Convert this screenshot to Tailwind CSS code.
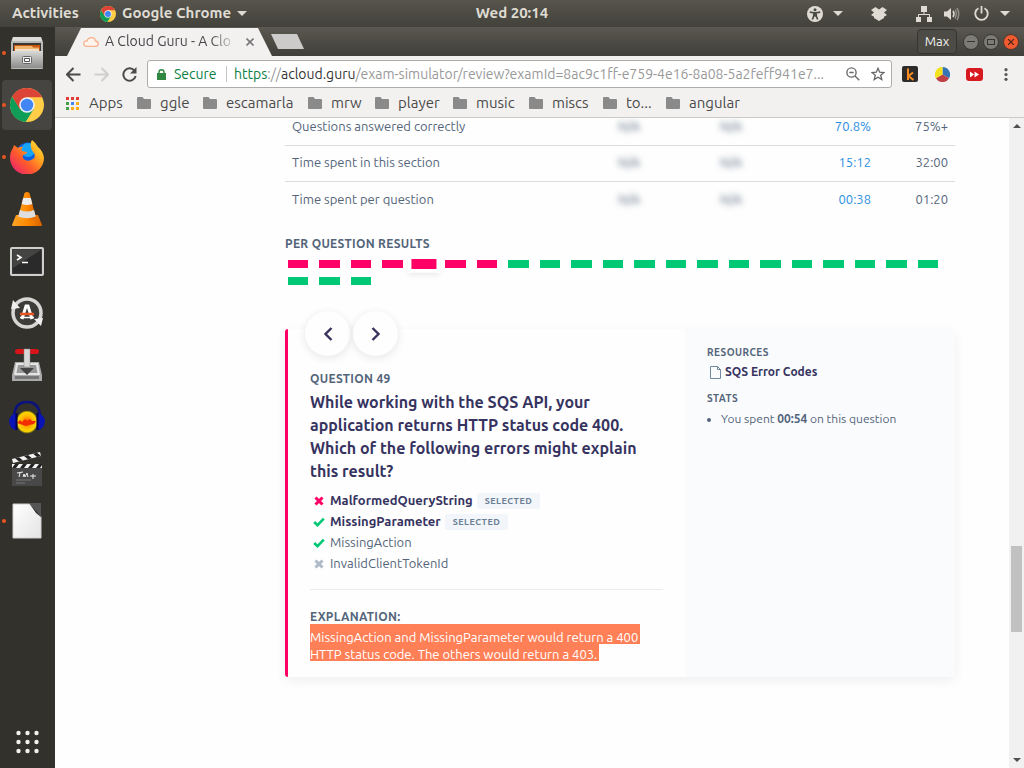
<!DOCTYPE html>
<html lang="en">
<head>
<meta charset="utf-8">
<title>A Cloud Guru - Exam Review</title>
<script src="https://cdn.jsdelivr.net/npm/@tailwindcss/browser@4"></script>
</head>
<body class="flex h-screen flex-col overflow-hidden bg-[#fefefe] font-['Ubuntu','Noto_Sans',sans-serif] text-[13px] text-[#54657a]">

<svg class="absolute size-0" aria-hidden="true">
  <defs>
    <linearGradient id="steel" x1="0" y1="0" x2="0" y2="1"><stop offset="0" stop-color="#d8d8d6"/><stop offset="1" stop-color="#8d8d8b"/></linearGradient>
    <linearGradient id="paper" x1="0" y1="0" x2="1" y2="1"><stop offset="0" stop-color="#fff"/><stop offset="1" stop-color="#e4e4e4"/></linearGradient>
    <linearGradient id="fox" x1="1" y1="0" x2="0" y2="1"><stop offset="0" stop-color="#fff44f"/><stop offset=".3" stop-color="#ffb01f"/><stop offset=".6" stop-color="#ff5a2c"/><stop offset="1" stop-color="#e4147e"/></linearGradient>
    <radialGradient id="wave"><stop offset="0" stop-color="#ff4a00"/><stop offset=".5" stop-color="#ffb400"/><stop offset=".85" stop-color="#f7d800"/><stop offset="1" stop-color="#b89a00" stop-opacity=".3"/></radialGradient>
    <linearGradient id="cone" x1="0" y1="0" x2="1" y2="0"><stop offset="0" stop-color="#ffa52a"/><stop offset=".5" stop-color="#ff8a00"/><stop offset="1" stop-color="#d96300"/></linearGradient>
    <symbol id="chrome" viewBox="0 0 48 48">
      <circle cx="24" cy="24" r="24" fill="#ffcd46"/>
      <path d="M3.200 12A24 24 0 0 0 22 48L34 29 14 29Z" fill="#0f9d58"/>
      <path d="M24 13H45.300A24 24 0 0 0 3.200 12L14 30Z" fill="#db4437"/>
      <circle cx="24" cy="24" r="11" fill="#f1f1f1"/><circle cx="24" cy="24" r="8.800" fill="#4285f4"/>
    </symbol>
    <symbol id="folder" viewBox="0 0 14 12"><path d="M1 0H5.500L7 2H13Q14 2 14 3V11Q14 12 13 12H1Q0 12 0 11V1Q0 0 1 0Z" fill="#8a8a8a"/></symbol>
    <symbol id="check" viewBox="0 0 12 10"><path d="M1.200 5 4.500 8.200 10.800 1.700" fill="none" stroke="#00c875" stroke-width="2.600"/></symbol>
    <symbol id="cross" viewBox="0 0 10 10"><path d="M1.500 1.500 8.500 8.500M8.500 1.500 1.500 8.500" fill="none" stroke="currentColor" stroke-width="3"/></symbol>
  </defs>
</svg>

<!-- Desktop top bar -->
<header class="grid h-[27px] shrink-0 grid-cols-[1fr_auto_1fr] items-center bg-linear-to-b from-[#57554c] to-[#42413b] text-[15px] font-bold text-[#dfdbd2]">
  <div class="flex items-center whitespace-nowrap">
    <button class="ml-3 w-[68px] text-left">Activities</button>
    <button class="ml-5 flex items-center gap-[6px]">
      <svg class="size-4"><use href="#chrome"/></svg>Google Chrome
      <svg class="h-[5px] w-[10px]" viewBox="0 0 10 5"><path d="M0 0H10L5 5Z" fill="currentColor"/></svg>
    </button>
  </div>
  <button>Wed 20:14</button>
  <div class="flex items-center justify-end pr-[14px]">
    <button class="flex items-center gap-[10px]" aria-label="Accessibility">
      <svg class="size-4" viewBox="0 0 16 16"><circle cx="8" cy="8" r="8" fill="currentColor"/><g fill="none" stroke="#4b4a43" stroke-width="1.700"><path d="M2.800 6.200 8 7 13.200 6.200M8 6V9.500M6.800 7V10L5.300 13.500M9.200 7V10L10.700 13.500"/></g><circle cx="8" cy="3.800" r="1.500" fill="#4b4a43"/><path d="M6.500 6H9.500V10.500H6.500Z" fill="#4b4a43"/></svg>
      <svg class="h-[5px] w-[10px]" viewBox="0 0 10 5"><path d="M0 0H10L5 5Z" fill="currentColor"/></svg>
    </button>
    <button class="ml-[28px]" aria-label="Dropbox"><svg class="h-[14px] w-4" viewBox="0 0 16 14"><path d="M4.500 0 8 2.500 11.500 0 16 3 13 5.500 16 8 13 9.800V11L8 14 3 11V9.800L0 8 3 5.500 0 3Z" fill="currentColor"/></svg></button>
    <button class="ml-[29px]" aria-label="Network"><svg class="size-4" viewBox="0 0 16 16"><path d="M5 0H11V6H5ZM0 11H5V16H0ZM11 11H16V16H11Z" fill="currentColor"/><path d="M8 6V8.500M2.500 11V8.500H13.500V11" fill="none" stroke="currentColor"/></svg></button>
    <button class="ml-[12px]" aria-label="Volume"><svg class="h-[14px] w-4" viewBox="0 0 16 14"><path d="M0 4.500H3L7 1V13L3 9.500H0Z" fill="currentColor"/><path d="M9 4Q11 7 9 10" fill="none" stroke="currentColor" stroke-width="1.500"/><path d="M11 2.500Q13.500 7 11 11.500M13 1Q16.500 7 13 13" fill="none" stroke="#918e85" stroke-width="1.500"/></svg></button>
    <button class="ml-[14px] flex items-center gap-[11px]" aria-label="System menu">
      <svg class="size-[15px]" viewBox="0 0 15 15"><path d="M4.500 2.200A6.200 6.200 0 1 0 10.500 2.200M7.500 0V7.500" fill="none" stroke="currentColor" stroke-width="1.800"/></svg>
      <svg class="h-[5px] w-[10px]" viewBox="0 0 10 5"><path d="M0 0H10L5 5Z" fill="currentColor"/></svg>
    </button>
  </div>
</header>

<div class="flex min-h-0 flex-1">
  <!-- Dock -->
  <nav class="flex w-[55px] shrink-0 flex-col gap-[2px] bg-[#33312c] pt-[1px]" aria-label="Dock">
    <button class="flex h-[50px] items-center" aria-label="Files"><i class="ml-[2px] size-1 rounded-full bg-[#e95420]"></i>
      <svg class="ml-[4px] size-[34px]" viewBox="0 0 34 34"><path d="M3 1H31L33 6V32Q33 33 32 33H2Q1 33 1 32V6Z" fill="#b9b9b7"/><path d="M3 1H31L32 5H2Z" fill="#dcdcda"/><path d="M3 7H31V15H3Z" fill="#3a3835"/><path d="M4 9H30V15H4Z" fill="#c9560e"/><path d="M5 10H22L23 11.500H29V15H5Z" fill="#f3b46d"/><path d="M5 13H29V15H5Z" fill="#eee0c8"/><path d="M1 15H33V32H1Z" fill="url(#steel)"/><rect x="12.500" y="20.500" width="9" height="7" rx="1" fill="#eee" stroke="#666"/><path d="M14.500 22.500H19.500V25.500H14.500Z" fill="#fff" stroke="#555"/></svg></button>
    <button class="mr-[3px] ml-[2px] flex h-[50px] items-center rounded-[4px] bg-[#464541]" aria-label="Chrome"><i class="size-1 rounded-full bg-[#e95420]"></i><svg class="ml-1 size-[34px]"><use href="#chrome"/></svg></button>
    <button class="flex h-[50px] items-center" aria-label="Firefox"><i class="ml-[2px] size-1 rounded-full bg-[#e95420]"></i>
      <svg class="ml-1 size-[34px]" viewBox="0 0 34 34"><circle cx="18" cy="15" r="12.500" fill="#0a5fe0"/><circle cx="18" cy="10" r="7" fill="#16a6f5"/><path d="M22 0Q26 3 28 7 33 11 34 18A17 16.500 0 0 1 0 18Q0 12 3 8L4 5 8 8Q10 6 13 7 11 9 12 11L17 12Q17 14 13 15 12 18 15 20 19 22 23 19 26 17 24 13 21 10 21 7 20 3 22 0Z" fill="url(#fox)"/></svg></button>
    <button class="flex h-[50px] items-center" aria-label="VLC">
      <svg class="ml-[11px] h-[36px] w-[32px]" viewBox="0 0 32 36"><path d="M5 24H27L31 34Q31 35 30 35H2Q1 35 1 34Z" fill="url(#cone)"/><path d="M13.500 2Q16 0 18.500 2L25 27Q16 32 7 27Z" fill="url(#cone)"/><path d="M12.200 7H19.800L21.300 13Q16 15 10.700 13Z" fill="#eee"/><path d="M9 19Q16 22 23 19L24.800 25.500Q16 29 7.200 25.500Z" fill="#dedede"/></svg></button>
    <button class="flex h-[50px] items-center" aria-label="Terminal">
      <svg class="ml-[10px] h-[29px] w-[34px]" viewBox="0 0 34 29"><rect x="1" y="1" width="32" height="27" rx="1" fill="#3a3b3a" stroke="#cfcfcd" stroke-width="2"/><path d="M3 3H31V26H3Z" fill="#292a29"/><path d="M3 3H31L3 21Z" fill="#444543"/><path d="M7 8 11 10.500 7 13M12 15.500H18" fill="none" stroke="#fff" stroke-width="1.600"/></svg></button>
    <button class="flex h-[50px] items-center" aria-label="Software Updater">
      <svg class="ml-[10px] size-[34px]" viewBox="0 0 34 34"><circle cx="17" cy="17" r="14" fill="#3d3c38" stroke="#d6d6d4" stroke-width="3.500"/><path d="M1 13 10 12 3 4Z" fill="#eee"/><path d="M33 22 24 23 31 30Z" fill="#eee"/><path d="M12 23 16 10H18L22 23" fill="none" stroke="#fff" stroke-width="3"/><path d="M10 18H24" stroke="#e95420" stroke-width="2.500"/><path d="M10 21.500H24" stroke="#fff" stroke-width="1.500"/></svg></button>
    <button class="flex h-[50px] items-center" aria-label="Transmission">
      <svg class="ml-[12px] h-[34px] w-[30px]" viewBox="0 0 30 34"><path d="M3 14H27L30 27V33H0V27Z" fill="#aaa"/><path d="M4 15H26L28 27H2Z" fill="#e5e5e5"/><path d="M6 17H24L25.500 25H4.500Z" fill="#999"/><path d="M3 28H27V31H3Z" fill="#777"/><rect x="3" y="1" width="24" height="5" rx="2.500" fill="#d81418"/><path d="M12 1H18V19H12Z" fill="#d8d8d6" stroke="#888" stroke-width=".5"/><path d="M8 20H22L15 27Z" fill="#454545"/></svg></button>
    <button class="flex h-[50px] items-center" aria-label="Audacity">
      <svg class="ml-[9px] h-[34px] w-[36px]" viewBox="0 0 36 34"><ellipse cx="18" cy="22" rx="11" ry="11.500" fill="url(#wave)"/><path d="M8 23 11 20 13 22 16 19 18 21 21 19 23 21 27 21 25 24 20 25 17 26 14 25Z" fill="#f22b00"/><path d="M5 18Q5 2 18 2T31 18" fill="none" stroke="#0a1280" stroke-width="2.500"/><path d="M8 13V30Q1 30 0 21 1 14 8 13ZM28 13V30Q35 30 36 21 35 14 28 13Z" fill="#0a14b4"/><path d="M7.500 13V30M28.500 13V30" stroke="#000050" stroke-width="2"/></svg></button>
    <button class="flex h-[50px] items-center" aria-label="Video editor">
      <svg class="ml-[12px] h-[34px] w-[30px]" viewBox="0 0 30 34"><path d="M0 7 28 0 29 4 1 11Z" fill="#f2f2f2"/><path d="M3 6.200 7 5.200 11 8.500 7 9.500ZM12 4 16 3 20 6.300 16 7.300ZM21 1.800 25 .8 29 4 25 5Z" fill="#222"/><path d="M0 12H30V34H0Z" fill="#484848"/><path d="M0 12H30V16H0Z" fill="#f2f2f2"/><path d="M3 12H7L4 16H0ZM11 12H15L12 16H8ZM19 12H23L20 16H16ZM27 12H30V13L28 16H24Z" fill="#222"/><path d="M5 21 11 20M8 21 7 25M11 25 12 22 13 25 15 21 16 25M18 24H24M21 22V27" fill="none" stroke="#eee"/><path d="M4 28H19M4 31H13" stroke="#777"/></svg></button>
    <button class="flex h-[50px] items-center" aria-label="LibreOffice"><i class="ml-[2px] size-1 rounded-full bg-[#e95420]"></i>
      <svg class="ml-[6px] h-[36px] w-[30px]" viewBox="0 0 30 36"><path d="M1 1H18L29 13V35H1Z" fill="url(#paper)" stroke="#d0d0d0"/><path d="M17 0H29V13Z" fill="#555"/><path d="M17 0 30 14H29L24 10Z" fill="#2c2c2c"/></svg></button>
    <button class="mt-auto mb-[14px] ml-[16px] w-[24px]" aria-label="Show applications">
      <svg class="size-6" viewBox="0 0 24 24" fill="#f3f2f0"><circle cx="2.500" cy="3" r="2.200"/><circle cx="11.500" cy="3" r="2.200"/><circle cx="20.500" cy="3" r="2.200"/><circle cx="2.500" cy="12" r="2.200"/><circle cx="11.500" cy="12" r="2.200"/><circle cx="20.500" cy="12" r="2.200"/><circle cx="2.500" cy="21" r="2.200"/><circle cx="11.500" cy="21" r="2.200"/><circle cx="20.500" cy="21" r="2.200"/></svg></button>
  </nav>

  <div class="flex min-w-0 flex-1 flex-col">
    <!-- Tab strip -->
    <div class="flex h-[29px] shrink-0 items-center bg-linear-to-b from-[#5a5850] to-[#403f39]">
      <div class="ml-[12px] flex h-full w-[205px] items-center bg-[#f2f1f0] pl-4 text-[14px] text-[#45454a] [clip-path:polygon(14px_1px,191px_1px,100%_100%,0_100%)]">
        <svg class="h-[10px] w-4 shrink-0" viewBox="0 0 16 10"><path d="M4 9.300Q.7 9.300.7 6.500T4 4Q5 .7 8.500.7T12.500 4Q15.300 4.300 15.300 6.700T12.500 9.300Z" fill="#fff4ec" stroke="#f7b18c" stroke-width="1.300"/></svg>
        <span class="ml-[6px] w-[132px] mask-r-from-80% whitespace-nowrap">A Cloud Guru - A Clo</span>
        <button class="ml-[9px]" aria-label="Close tab"><svg class="size-2" viewBox="0 0 8 8"><path d="M.5.5 7.500 7.500M7.500.5.5 7.500" stroke="#77777a" stroke-width="1.600"/></svg></button>
      </div>
      <button class="-ml-px h-[15px] w-[33px] bg-[#cccbc9] [clip-path:polygon(0_0,26px_0,100%_100%,7px_100%)]" aria-label="New tab"></button>
      <button class="mr-[6px] ml-auto flex h-[25px] w-[40px] items-center justify-center rounded-[4px] border border-[#35342f] bg-[#4c4b45] text-[13px] text-[#f2f1f0]">Max</button>
      <div class="flex gap-1 pr-[5px]">
        <button class="flex size-4 items-center justify-center rounded-full border border-[#3a3934] bg-[#7d7b75]" aria-label="Minimize"><i class="h-px w-2 bg-[#35342f]"></i></button>
        <button class="flex size-4 items-center justify-center rounded-full border border-[#3a3934] bg-[#7d7b75]" aria-label="Maximize"><i class="h-[6px] w-2 border border-[#35342f]"></i></button>
        <button class="flex size-4 items-center justify-center rounded-full border border-[#56382c] bg-[#f05a30]" aria-label="Close"><svg class="size-[6px]" viewBox="0 0 6 6"><path d="M0 0 6 6M6 0 0 6" stroke="#4a2415" stroke-width="1.200"/></svg></button>
      </div>
    </div>

    <!-- Toolbar -->
    <div class="flex h-9 shrink-0 items-center bg-[#f2f1f0] pr-[16px] pl-[11px]">
      <button aria-label="Back"><svg class="size-[15px]" viewBox="0 0 15 15"><path d="M14.500 7.500H1.500M7.500 1 1 7.500 7.500 14" fill="none" stroke="#4a4a4a" stroke-width="2"/></svg></button>
      <button class="ml-[13px]" aria-label="Forward"><svg class="size-[15px]" viewBox="0 0 15 15"><path d="M.5 7.500H13.500M7.500 1 14 7.500 7.500 14" fill="none" stroke="#cfcecd" stroke-width="2"/></svg></button>
      <button class="ml-[13px]" aria-label="Reload"><svg class="size-[15px]" viewBox="0 0 15 15"><path d="M12.500 3.800A6.200 6.200 0 1 0 13.600 9" fill="none" stroke="#4a4a4a" stroke-width="2"/><path d="M14.500 0V6.500H8Z" fill="#4a4a4a"/></svg></button>
      <div class="ml-[10px] flex h-[28px] min-w-0 flex-1 items-center rounded-[3px] border border-[#adacab] bg-white pr-[6px] pl-[9px] text-[14px]">
        <svg class="h-[11px] w-[9px] shrink-0" viewBox="0 0 9 11"><path d="M0 4H9V11H0Z" fill="#2f8741"/><path d="M2 5V3Q2 .8 4.500.8T7 3V5" fill="none" stroke="#2f8741" stroke-width="1.400"/></svg>
        <span class="ml-[8px] w-[43px] text-[#0b8043]">Secure</span>
        <i class="ml-[9px] h-4 w-px bg-[#c6c6c6]"></i>
        <span class="ml-[7px] min-w-0 flex-1 whitespace-nowrap text-[#999]"><span class="text-[#0b8043]">https</span>://<span class="text-[#333]">acloud.guru</span>/exam-simulator/review?examId=8ac9c1ff-e759-4e16-8a08-5a2feff941e7...</span>
        <button class="ml-[12px]" aria-label="Zoom"><svg class="size-[14px]" viewBox="0 0 14 14"><g fill="none" stroke="#6b6b6b" stroke-width="1.400"><circle cx="5.500" cy="5.500" r="4.600"/><path d="M9 9 13.300 13.300M3.300 5.500H7.700"/></g></svg></button>
        <button class="ml-[11px]" aria-label="Bookmark"><svg class="size-[14px]" viewBox="0 0 14 14"><path d="M7 1.300 8.700 5.200 13 5.500 9.700 8.200 10.800 12.500 7 10.200 3.200 12.500 4.300 8.200 1 5.500 5.300 5.200Z" fill="none" stroke="#666" stroke-width="1.300"/></svg></button>
      </div>
      <button class="ml-[10px]" aria-label="Extension k"><svg class="size-4" viewBox="0 0 16 16"><rect width="16" height="16" rx="2" fill="#2e2c2b"/><path d="M6 2.500V14M11 6.500 6.500 10 11.500 14" fill="none" stroke="#f68b1f" stroke-width="2"/></svg></button>
      <button class="ml-[17px]" aria-label="Color wheel"><svg class="size-[15px]" viewBox="0 0 16 16"><path d="M8 8V0A8 8 0 0 1 15 12Z" fill="#3574b5"/><path d="M8 8 15 12A8 8 0 0 1 1 12Z" fill="#bf4045"/><path d="M8 8 1 12A8 8 0 0 1 8 0Z" fill="#f5e11c"/></svg></button>
      <button class="ml-[16px]" aria-label="Video speed"><svg class="h-[13px] w-[17px]" viewBox="0 0 17 13"><rect width="17" height="13" rx="3" fill="#d81920"/><path d="M4 3.500 8 6.500 4 9.500ZM8.500 3.500 13 6.500 8.500 9.500Z" fill="#fff"/></svg></button>
      <button class="ml-[21px]" aria-label="Menu"><svg class="h-[13px] w-[4px]" viewBox="0 0 4 13" fill="#555"><circle cx="2" cy="1.700" r="1.600"/><circle cx="2" cy="6.500" r="1.600"/><circle cx="2" cy="11.300" r="1.600"/></svg></button>
    </div>

    <!-- Bookmarks -->
    <div class="flex h-[26px] shrink-0 items-center border-b border-[#cbcac9] bg-[#f2f1f0] pb-[3px] pl-[11px] text-[15px] leading-5 text-[#4a4a4a]">
      <a href="#" class="flex w-[71px] items-center gap-[10px]"><svg class="size-[13px]" viewBox="0 0 13 13"><path d="M0 0H3V3H0ZM5 0H8V3H5ZM10 0H13V3H10Z" fill="#e53935"/><path d="M0 5H3V8H0ZM0 10H3V13H0Z" fill="#43a047"/><path d="M5 5H8V8H5Z" fill="#4285f4"/><path d="M10 5H13V8H10ZM5 10H8V13H5ZM10 10H13V13H10Z" fill="#fbac17"/></svg>Apps</a>
      <a href="#" class="flex w-[66px] items-center gap-[9px]"><svg class="h-3 w-[14px]"><use href="#folder"/></svg>ggle</a>
      <a href="#" class="flex w-[105px] items-center gap-[9px]"><svg class="h-3 w-[14px]"><use href="#folder"/></svg>escamarla</a>
      <a href="#" class="flex w-[67px] items-center gap-[9px]"><svg class="h-3 w-[14px]"><use href="#folder"/></svg>mrw</a>
      <a href="#" class="flex w-[78px] items-center gap-[9px]"><svg class="h-3 w-[14px]"><use href="#folder"/></svg>player</a>
      <a href="#" class="flex w-[76px] items-center gap-[9px]"><svg class="h-3 w-[14px]"><use href="#folder"/></svg>music</a>
      <a href="#" class="flex w-[74px] items-center gap-[9px]"><svg class="h-3 w-[14px]"><use href="#folder"/></svg>miscs</a>
      <a href="#" class="flex w-[63px] items-center gap-[9px]"><svg class="h-3 w-[14px]"><use href="#folder"/></svg>to...</a>
      <a href="#" class="flex items-center gap-[9px]"><svg class="h-3 w-[14px]"><use href="#folder"/></svg>angular</a>
    </div>

    <div class="flex min-h-0 flex-1">
      <!-- Page -->
      <main class="min-w-0 flex-1 overflow-hidden pr-[54px] pl-[230px]">
        <table class="-mt-[9px] w-full table-fixed text-right">
          <colgroup><col><col class="w-[102px]"><col class="w-[102px]"><col class="w-[129px]"><col class="w-[77px]"></colgroup>
          <tbody>
            <tr class="h-9 border-b border-[#dcdddf]"><th scope="row" class="pl-[7px] text-left font-normal">Questions answered correctly</th><td class="pr-[7px]"><span class="blur-[3px]">N/A</span></td><td class="pr-[7px]"><span class="blur-[3px]">N/A</span></td><td class="pr-[7px] text-[#2b8fe0]">70.8%</td><td class="pr-[7px]">75%+</td></tr>
            <tr class="h-9 border-b border-[#dcdddf]"><th scope="row" class="pl-[7px] text-left font-normal">Time spent in this section</th><td class="pr-[7px]"><span class="blur-[3px]">N/A</span></td><td class="pr-[7px]"><span class="blur-[3px]">N/A</span></td><td class="pr-[7px] text-[#2b8fe0]">15:12</td><td class="pr-[7px]">32:00</td></tr>
            <tr class="h-9"><th scope="row" class="pl-[7px] text-left font-normal">Time spent per question</th><td class="pr-[7px]"><span class="blur-[3px]">N/A</span></td><td class="pr-[7px]"><span class="blur-[3px]">N/A</span></td><td class="pr-[7px] text-[#2b8fe0]">00:38</td><td class="pr-[7px]">01:20</td></tr>
          </tbody>
        </table>

        <h2 class="mt-[19px] text-[12px] leading-4 font-bold tracking-wide">PER QUESTION RESULTS</h2>
        <div class="mt-2 mr-[17px] ml-[3px] grid grid-cols-[repeat(21,minmax(0,1fr))] gap-x-[11px] gap-y-[9px]">
          <button class="h-2 bg-[#ff0066]" aria-label="Question 1"></button>
          <button class="h-2 bg-[#ff0066]" aria-label="Question 2"></button>
          <button class="h-2 bg-[#ff0066]" aria-label="Question 3"></button>
          <button class="h-2 bg-[#ff0066]" aria-label="Question 4"></button>
          <button class="h-2 scale-125 bg-[#ff0066] shadow-[0_0_0_3px_#fff,0_2px_5px_3px_#0000001a]" aria-label="Question 5" aria-current="true"></button>
          <button class="h-2 bg-[#ff0066]" aria-label="Question 6"></button>
          <button class="h-2 bg-[#ff0066]" aria-label="Question 7"></button>
          <button class="h-2 bg-[#00c875]" aria-label="Question 8"></button>
          <button class="h-2 bg-[#00c875]" aria-label="Question 9"></button>
          <button class="h-2 bg-[#00c875]" aria-label="Question 10"></button>
          <button class="h-2 bg-[#00c875]" aria-label="Question 11"></button>
          <button class="h-2 bg-[#00c875]" aria-label="Question 12"></button>
          <button class="h-2 bg-[#00c875]" aria-label="Question 13"></button>
          <button class="h-2 bg-[#00c875]" aria-label="Question 14"></button>
          <button class="h-2 bg-[#00c875]" aria-label="Question 15"></button>
          <button class="h-2 bg-[#00c875]" aria-label="Question 16"></button>
          <button class="h-2 bg-[#00c875]" aria-label="Question 17"></button>
          <button class="h-2 bg-[#00c875]" aria-label="Question 18"></button>
          <button class="h-2 bg-[#00c875]" aria-label="Question 19"></button>
          <button class="h-2 bg-[#00c875]" aria-label="Question 20"></button>
          <button class="h-2 bg-[#00c875]" aria-label="Question 21"></button>
          <button class="h-2 bg-[#00c875]" aria-label="Question 22"></button>
          <button class="h-2 bg-[#00c875]" aria-label="Question 23"></button>
          <button class="h-2 bg-[#00c875]" aria-label="Question 24"></button>
        </div>

        <article class="mt-11 flex rounded-[3px] border-l-[3px] border-[#ff0066] shadow-[0_4px_12px_#0000000f]">
          <section class="min-w-0 flex-1 bg-[#fefefe] px-[22px] pb-4">
            <div class="-mt-[18px] -ml-[5px] flex gap-[3px]">
              <button class="flex size-[45px] items-center justify-center rounded-full bg-[#fefefe] shadow-[0_2px_8px_#0000001a]" aria-label="Previous question"><svg class="h-[14px] w-[10px]" viewBox="0 0 10 14"><path d="M8.500 1 2.500 7 8.500 13" fill="none" stroke="#36335f" stroke-width="2.400"/></svg></button>
              <button class="flex size-[45px] items-center justify-center rounded-full bg-[#fefefe] shadow-[0_2px_8px_#0000001a]" aria-label="Next question"><svg class="h-[14px] w-[10px]" viewBox="0 0 10 14"><path d="M1.500 1 7.500 7 1.500 13" fill="none" stroke="#36335f" stroke-width="2.400"/></svg></button>
            </div>
            <h3 class="mt-[15px] text-[12px] leading-4 font-bold tracking-wide">QUESTION 49</h3>
            <p class="mt-1 text-[16px] leading-[23px] font-bold text-[#36335f]">While working with the SQS API, your<br>application returns HTTP status code 400.<br>Which of the following errors might explain<br>this result?</p>
            <ul class="mt-[7px] leading-[21px]">
              <li class="flex items-center font-bold text-[#36335f]"><svg class="mr-[6px] ml-1 h-[10px] w-[10px] text-[#ff0066]"><use href="#cross"/></svg>MalformedQueryString<span class="ml-1 rounded-[2px] bg-[#f2f6fa] px-2 text-[9px] leading-4 tracking-wider text-[#6a7f95]">SELECTED</span></li>
              <li class="flex items-center font-bold text-[#36335f]"><svg class="mr-[5px] ml-[3px] h-[10px] w-3"><use href="#check"/></svg>MissingParameter<span class="ml-1 rounded-[2px] bg-[#f2f6fa] px-2 text-[9px] leading-4 tracking-wider text-[#6a7f95]">SELECTED</span></li>
              <li class="flex items-center"><svg class="mr-[5px] ml-[3px] h-[10px] w-3"><use href="#check"/></svg>MissingAction</li>
              <li class="flex items-center"><svg class="mr-[6px] ml-1 h-[10px] w-[10px] text-[#afbac8]"><use href="#cross"/></svg>InvalidClientTokenId</li>
            </ul>
            <hr class="mt-[15px] border-[#e9ebee]">
            <h3 class="mt-[19px] text-[12px] leading-4 font-bold tracking-wide">EXPLANATION:</h3>
            <p class="-mt-px leading-[14px] text-white"><span class="block w-fit bg-[#ff7f57] pt-[6px] pr-[2px]">MissingAction and MissingParameter would return a 400</span><span class="block w-fit bg-[#ff7f57] pt-[3px] pr-[2px]">HTTP status code. The others would return a 403.</span></p>
          </section>
          <aside class="w-[270px] shrink-0 rounded-r-[3px] bg-[#fafbfd] px-[22px] pt-4">
            <h4 class="text-[10px] leading-4 font-bold tracking-wider">RESOURCES</h4>
            <a href="#" class="mt-[2px] flex items-center gap-1 text-[12px] leading-[18px] font-bold text-[#36335f]"><svg class="ml-[3px] h-[13px] w-[11px]" viewBox="0 0 11 13"><path d="M.5.5H7.500L10.500 3.500V12.500H.5ZM7.500.5V3.500H10.500" fill="none" stroke="#7488a0"/></svg>SQS Error Codes</a>
            <h4 class="mt-[10px] text-[10px] leading-4 font-bold tracking-wider">STATS</h4>
            <ul class="mt-1 list-disc pl-[14px] text-[12px] leading-4"><li>You spent <b>00:54</b> on this question</li></ul>
          </aside>
        </article>
      </main>

      <!-- Scrollbar -->
      <div class="flex w-[15px] shrink-0 flex-col items-center bg-[#f1f1f1] py-[6px]">
        <svg class="h-1 w-2" viewBox="0 0 8 4"><path d="M4 0 8 4H0Z" fill="#505050"/></svg>
        <span class="mt-[418px] h-[86px] w-[11px] bg-[#c1c1c1]"></span>
        <svg class="mt-auto h-1 w-2" viewBox="0 0 8 4"><path d="M0 0H8L4 4Z" fill="#505050"/></svg>
      </div>
    </div>
  </div>
</div>
</body>
</html>
